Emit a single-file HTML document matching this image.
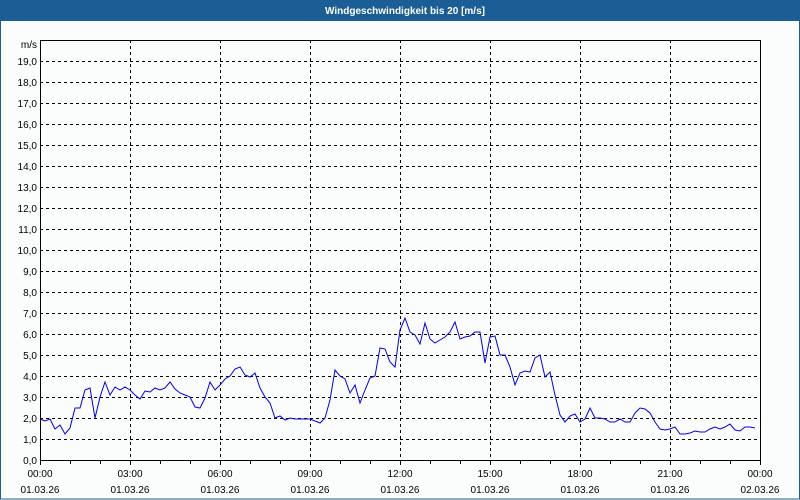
<!DOCTYPE html>
<html><head><meta charset="utf-8"><style>
html,body{margin:0;padding:0;width:800px;height:500px;overflow:hidden;background:#fbfdfc}
svg{display:block}
text{font-family:"Liberation Sans",sans-serif;font-size:10px;fill:#000}
</style></head><body>
<svg width="800" height="500" viewBox="0 0 800 500">
<rect x="0" y="0" width="800" height="500" fill="#fbfdfc"/>
<rect x="0" y="0" width="800" height="21" fill="#1b5e96"/>
<rect x="0.5" y="0" width="799" height="499" fill="none" stroke="#1b5e96" stroke-width="1"/>
<text x="405" y="14" text-anchor="middle" style="fill:#fff;font-weight:bold;font-size:10px">Windgeschwindigkeit bis 20 [m/s]</text>
<g stroke="#000" stroke-width="1" stroke-dasharray="3,3" fill="none">
<path d="M40 439.5H760M40 418.5H760M40 397.5H760M40 376.5H760M40 355.5H760M40 334.5H760M40 313.5H760M40 292.5H760M40 271.5H760M40 250.5H760M40 229.5H760M40 208.5H760M40 187.5H760M40 166.5H760M40 145.5H760M40 124.5H760M40 103.5H760M40 82.5H760M40 61.5H760"/>
<path d="M130.5 40V460M220.5 40V460M310.5 40V460M400.5 40V460M490.5 40V460M580.5 40V460M670.5 40V460"/>
</g>
<rect x="40.5" y="40.5" width="720" height="420" fill="none" stroke="#000" stroke-width="1"/>
<g stroke="#000" stroke-width="1">
<path d="M70.5 460V464M100.5 460V464M160.5 460V464M190.5 460V464M250.5 460V464M280.5 460V464M340.5 460V464M370.5 460V464M430.5 460V464M460.5 460V464M520.5 460V464M550.5 460V464M610.5 460V464M640.5 460V464M700.5 460V464M730.5 460V464M40.5 460V465M130.5 460V465M220.5 460V465M310.5 460V465M400.5 460V465M490.5 460V465M580.5 460V465M670.5 460V465M760.5 460V465"/>
</g>
<polyline fill="none" stroke="#0000ee" stroke-width="1" points="40,419 45,421 50,419 55,429 60,425 65,434 70,428 75,408 80,408 85,390 90,388 95,418 100,397 105,382 110,395 115,387 120,390 125,387 130,390 135,395 140,399 145,391 150,392 155,388 160,390 165,388 170,382 175,389 180,393 185,395 190,397 195,407 200,408 205,398 210,382 215,390 220,385 225,379 230,376 235,369 240,367 245,375 250,377 255,373 260,388 265,397 270,403 275,418 280,416 285,420 290,418 295,419 300,419 305,419 310,419 315,421 320,423 325,418 330,400 335,370 340,376 345,379 350,393 355,385 360,403 365,390 370,378 375,376 380,348 385,349 390,362 395,367 400,330 405,318 410,332 415,335 420,344 425,323 430,339 435,343 440,340 445,337 450,332 455,322 460,339 465,337 470,336 475,332 480,332 485,363 490,337 495,336 500,355 505,355 510,367 515,385 520,373 525,371 530,372 535,358 540,355 545,377 550,372 555,395 560,415 565,422 570,416 575,414 580,422 585,419 590,408 595,418 600,418 605,419 610,422 615,422 620,419 625,422 630,422 635,413 640,408 645,409 650,413 655,422 660,429 665,430 670,429 675,427 680,434 685,434 690,433 695,431 700,432 705,432 710,429 715,427 720,429 725,427 730,424 735,430 740,431 745,427 750,427 755,428"/>
<g text-anchor="end">
<text x="37" y="48">m/s</text>
<text x="37" y="65">19,0</text><text x="37" y="86">18,0</text><text x="37" y="107">17,0</text><text x="37" y="128">16,0</text><text x="37" y="149">15,0</text><text x="37" y="170">14,0</text><text x="37" y="191">13,0</text><text x="37" y="212">12,0</text><text x="37" y="233">11,0</text><text x="37" y="254">10,0</text><text x="37" y="275">9,0</text><text x="37" y="296">8,0</text><text x="37" y="317">7,0</text><text x="37" y="338">6,0</text><text x="37" y="359">5,0</text><text x="37" y="380">4,0</text><text x="37" y="401">3,0</text><text x="37" y="422">2,0</text><text x="37" y="443">1,0</text><text x="37" y="464">0,0</text>
</g>
<g text-anchor="middle">
<text x="40" y="477">00:00</text><text x="130" y="477">03:00</text><text x="220" y="477">06:00</text><text x="310" y="477">09:00</text><text x="400" y="477">12:00</text><text x="490" y="477">15:00</text><text x="580" y="477">18:00</text><text x="670" y="477">21:00</text><text x="760" y="477">00:00</text>
<text x="40" y="493">01.03.26</text><text x="130" y="493">01.03.26</text><text x="220" y="493">01.03.26</text><text x="310" y="493">01.03.26</text><text x="400" y="493">01.03.26</text><text x="490" y="493">01.03.26</text><text x="580" y="493">01.03.26</text><text x="670" y="493">01.03.26</text><text x="760" y="493">02.03.26</text>
</g>
</svg>
</body></html>
